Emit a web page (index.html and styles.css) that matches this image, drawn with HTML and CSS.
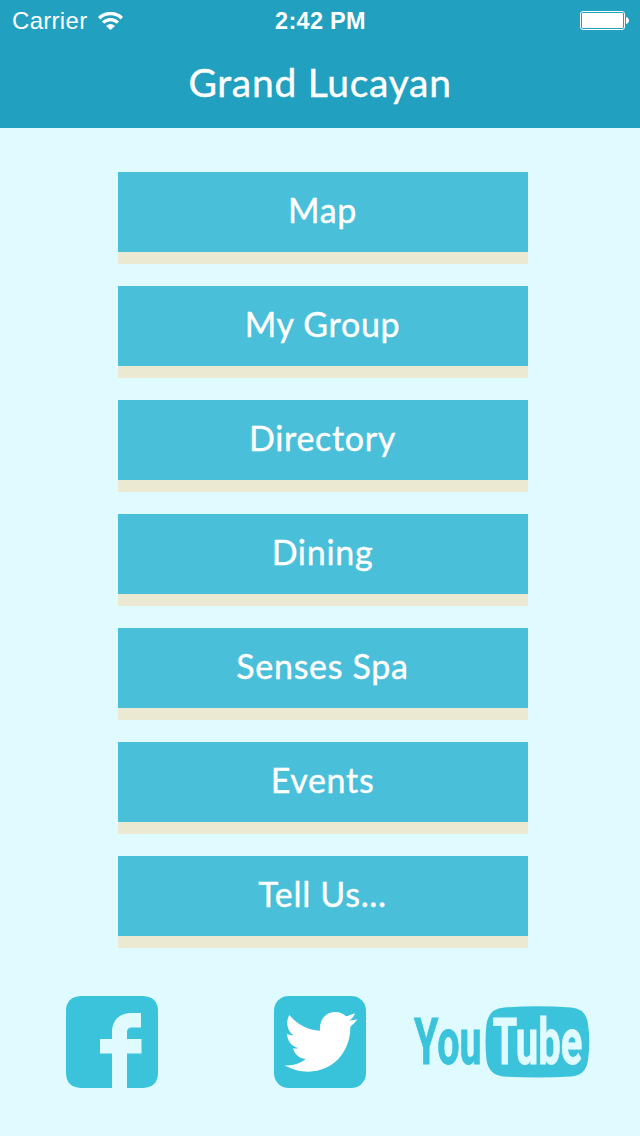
FILE: index.html
```html
<!DOCTYPE html>
<html lang="en">
<head>
<meta charset="utf-8">
<title>Grand Lucayan</title>
<link rel="stylesheet" href="styles.css">
</head>
<body>
<header class="header">
  <div class="status">
    <div class="status-left">
      <span class="carrier">Carrier</span>
      <svg class="wifi" viewBox="0 0 25 18" aria-hidden="true">
        <path d="M1.200 6.200a16 16 0 0 1 22.600 0" fill="none" stroke="#fff" stroke-width="3.500"/>
        <path d="M5.100 10.700a10.500 10.500 0 0 1 14.800 0" fill="none" stroke="#fff" stroke-width="3.300"/>
        <path d="M8 14q4.500-4 9 0l-4.500 4z" fill="#fff"/>
      </svg>
    </div>
    <span class="time">2:42 PM</span>
    <svg class="battery" viewBox="0 0 49 19" aria-hidden="true">
      <rect x=".5" y=".5" width="44" height="18" rx="2.500" fill="none" stroke="#fff"/>
      <rect x="2" y="2" width="41" height="15" rx="1" fill="#fff"/>
      <path d="M46 6c4 1 4 6 0 7z" fill="#fff"/>
    </svg>
  </div>
  <h1 class="title">Grand Lucayan</h1>
</header>
<nav class="menu">
  <a class="item"><span>Map</span></a>
  <a class="item"><span>My Group</span></a>
  <a class="item"><span>Directory</span></a>
  <a class="item"><span>Dining</span></a>
  <a class="item"><span>Senses Spa</span></a>
  <a class="item"><span>Events</span></a>
  <a class="item"><span>Tell Us...</span></a>
</nav>
<footer class="social">
  <svg class="facebook" viewBox="0 0 92 92" role="img" aria-label="Facebook">
    <path fill="#3ac3da" d="M15 0H77Q92 1 92 15V77Q92 91 77 92H61V57.500H75.500V43H61V36Q61 31.500 65.500 31.500H75V17H64C53 17.500 46 25 46 36V43H34V57.500H46V92H15Q0 91 0 77V15Q0 1 15 0Z"/>
  </svg>
  <svg class="twitter" viewBox="42 48 276 276" role="img" aria-label="Twitter">
    <rect x="42" y="48" width="276" height="276" rx="44" fill="#38c3da"/>
    <path fill="#fff" d="M88 105C112 134 144 151 180 152C177 118 198 96 226 96C240 96 250 101 258 109C268 107 277 103 285 100C282 110 276 116 268 122C277 121 284 120 292 118C286 127 280 133 271 140C272 215 220 275 145 275C118 275 95 268 74 256C98 258 120 251 137 237C118 236 104 223 99 205C105 206 111 206 116 204C96 200 82 183 81 161C87 164 94 166 101 166C82 153 76 127 88 105Z"/>
  </svg>
  <svg class="youtube" viewBox="0 0 176 72" role="img" aria-label="YouTube">
    <path fill="#3ac3da" d="M90 1.500Q123.500-.8 157 1.500Q172 2.500 174 18Q176.500 36 174 54Q172 69.500 157 70.500Q123.500 72.500 90 70.500Q75 69.500 72.500 54Q70.500 36 72.500 18Q75 2.500 90 1.500Z"/>
    <text class="yt you" x="0" y="58" textLength="67.500" lengthAdjust="spacingAndGlyphs">You</text>
    <text class="yt tube" x="78.500" y="58" textLength="90" lengthAdjust="spacingAndGlyphs">Tube</text>
  </svg>
</footer>
</body>
</html>
```
FILE: styles.css
```css
body {
  margin: 0;
  width: 640px;
  height: 1136px;
  background: #e0fbff;
  color: #fff;
  font-family: Lato, sans-serif;
  overflow: hidden;
}
.header {
  height: 128px;
  background: #21a0c0;
}
.status {
  display: grid;
  grid-template-columns: 1fr auto 1fr;
  align-items: center;
  height: 40px;
  padding: 0 11px 0 12px;
  font: 24px/40px "Liberation Sans", Arial, sans-serif;
}
.status-left {
  display: flex;
  align-items: center;
  gap: 11px;
}
.carrier {
  padding-top: 1px;
  letter-spacing: 0.3px;
}
.wifi {
  width: 25px;
  height: 18px;
}
.time {
  padding-top: 1px;
  font-size: 23.500px;
  font-weight: bold;
  letter-spacing: 0.300px;
}
.battery {
  justify-self: end;
  width: 49px;
  height: 19px;
}
.title {
  margin: 0;
  font-size: 39px;
  font-weight: 400;
  line-height: 84px;
  letter-spacing: 0.700px;
  text-align: center;
  -webkit-text-stroke: 0.400px #fff;
}
.menu {
  display: flex;
  flex-direction: column;
  gap: 22px;
  width: 410px;
  margin: 44px 0 0 118px;
}
.item {
  height: 80px;
  border-bottom: 12px solid #ece9d2;
  background: #49bfd9;
  font-size: 34px;
  line-height: 75px;
  letter-spacing: 0.700px;
  text-align: center;
  text-indent: -1px;
  -webkit-text-stroke: 0.400px #fff;
}
.social {
  display: flex;
  align-items: center;
  margin-top: 48px;
  padding-left: 66px;
}
.facebook,
.twitter {
  width: 92px;
  height: 92px;
}
.twitter {
  margin-left: 116px;
}
.youtube {
  width: 176px;
  height: 72px;
  margin-left: 48px;
  overflow: visible;
}
.yt {
  font-family: Roboto, sans-serif;
  font-size: 64px;
  font-weight: 700;
  stroke-width: 0.800px;
}
.you {
  fill: #3ac3da;
  stroke: #3ac3da;
}
.tube {
  fill: #e0fbff;
  stroke: #e0fbff;
}
```
